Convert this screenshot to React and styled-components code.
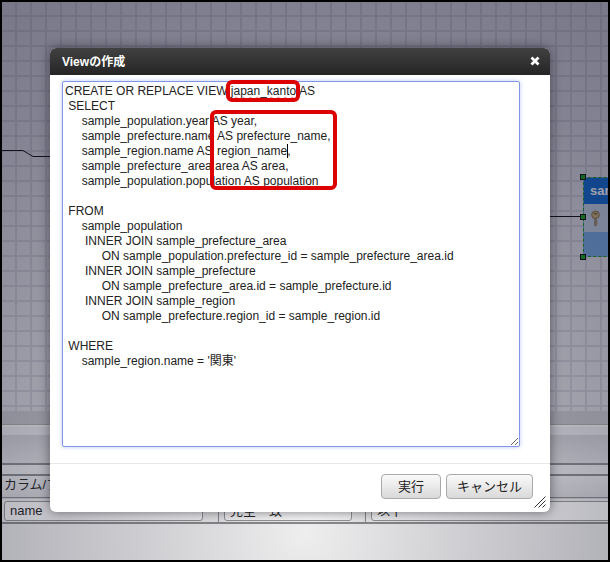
import React from "react";
import styled, { createGlobalStyle } from "styled-components";

const GlobalStyle = createGlobalStyle`
  html, body {
    margin: 0;
    padding: 0;
    height: 100%;
    overflow: hidden;
    background: #000;
  }
  body {
    font-family: "Liberation Sans", "Noto Sans CJK JP", sans-serif;
    color: #222;
  }
`;

const Frame = styled.div`
  position: relative;
  box-sizing: border-box;
  width: 610px;
  height: 562px;
  border: 2px solid #000;
  display: flex;
  flex-direction: column;
  overflow: hidden;
  background: #f2f2f2;
`;

const Canvas = styled.div`
  position: relative;
  height: 409px;
  flex: none;
  overflow: hidden;
  background-color: #d6d6dc;
  background-image: linear-gradient(#c0c0ca 2px, transparent 2px),
    linear-gradient(90deg, #c0c0ca 2px, transparent 2px);
  background-size: 15px 15px;
  background-position: 13px 13px;
`;

const Wires = styled.svg`
  position: absolute;
  left: 0;
  top: 0;
`;

const TableNode = styled.div`
  position: absolute;
  left: 581px;
  top: 175px;
  width: 120px;
  height: 80px;
  box-sizing: border-box;
  border: 1px dashed #0c8a0c;
  display: flex;
  flex-direction: column;
  background: #6c9fd8;
`;

const NodeHead = styled.div`
  height: 26px;
  flex: none;
  background: #005ec8;
  color: #fff;
  font-size: 13px;
  font-weight: bold;
  line-height: 26px;
  padding-left: 6px;
`;

const NodeRow = styled.div`
  height: 28px;
  flex: none;
  background: #b8c8d9;
  display: flex;
  align-items: center;
  padding-left: 6px;
`;

const Handle = styled.span`
  position: absolute;
  left: -4px;
  top: ${(props) => props.y}px;
  width: 4px;
  height: 4px;
  border: 1px solid #000;
  background: #0a9a0a;
`;

const BottomPanel = styled.div`
  flex: 1;
  display: flex;
  flex-direction: column;
`;

const DarkBand = styled.div`
  height: 13px;
  background: #c2c2c8;
  border-bottom: 1px solid #aaa;
`;

const LightStrip = styled.div`
  height: 8px;
  margin-top: 2px;
  background: #e8e8ec;
`;

const ToolStrip = styled.div`
  height: 28px;
  background: linear-gradient(#cfcfd4, #e2e2e6);
  border-bottom: 2px solid #8c8c90;
`;

const SpacerRow = styled.div`
  height: 9px;
  background: #eeeef0;
  border-bottom: 2px solid #8c8c90;
`;

const HeadRow = styled.div`
  height: 22px;
  box-sizing: border-box;
  padding: 1px 2px 0;
  font-size: 13px;
  line-height: 16px;
  color: #222;
  background: linear-gradient(#eeeef0, #dedee2);
  border-bottom: 1px solid #8c8c90;
`;

const InputRow = styled.div`
  display: grid;
  grid-template-columns: 216px 147px 1fr;
  height: 26px;
  box-sizing: border-box;
  border-top: 1px solid #d8d8dc;
  border-bottom: 2px solid #8c8c90;
`;

const InputCell = styled.div`
  padding: 2px ${(props) => props.end}px 0 ${(props) => props.pad}px;
  border-left: ${(props) => (props.first ? "none" : "1px solid #8c8c90")};
`;

const FieldBox = styled.div`
  box-sizing: border-box;
  height: 20px;
  width: ${(props) => props.w || "100%"};
  border: 1px solid #999;
  border-radius: 3px;
  background: #fff;
  padding-left: 5px;
  font-size: 13px;
  line-height: 18px;
  white-space: nowrap;
  overflow: hidden;
`;

const Floor = styled.div`
  flex: 1;
`;

const Overlay = styled.div`
  position: absolute;
  inset: 0;
  background: radial-gradient(
    circle 640px at 303px 530px,
    rgba(40, 40, 60, 0.02) 0,
    rgba(40, 40, 62, 0.3) 45%,
    rgba(40, 40, 66, 0.47) 75%,
    rgba(40, 40, 66, 0.56) 100%
  );
`;

const Dialog = styled.div`
  position: absolute;
  left: 48px;
  top: 46px;
  width: 500px;
  height: 464px;
  display: flex;
  flex-direction: column;
  background: #fff;
  border-radius: 6px;
  box-shadow: 0 0 12px rgba(20, 20, 30, 0.55);
`;

const TitleBar = styled.div`
  height: 27px;
  flex: none;
  box-sizing: border-box;
  display: flex;
  align-items: center;
  justify-content: space-between;
  padding: 0 10px 2px 12px;
  border-radius: 6px 6px 0 0;
  background: linear-gradient(#414141, #252525);
  color: #fff;
  font-size: 12px;
  font-weight: bold;
`;

const CloseIcon = styled.svg`
  display: block;
  margin-top: 1px;
`;

const Body = styled.div`
  height: 389px;
  flex: none;
  box-sizing: border-box;
  padding: 6px 30px 0 12px;
  border-bottom: 1px solid #e8e8e8;
`;

const SqlBox = styled.div`
  box-sizing: border-box;
  width: 458px;
  height: 366px;
  padding: 2px 2px;
  border: 1px solid #7f96e6;
  border-radius: 2px;
  box-shadow: 0 0 4px rgba(110, 140, 235, 0.45);
  font-size: 12px;
  line-height: 15px;
  color: #222;
  white-space: pre;
  overflow: hidden;
  resize: both;
`;

const Misspelled = styled.span`
  text-decoration: underline wavy #ef8a8a 1px;
  text-underline-offset: 1px;
`;

const Alias = styled.span`
  margin-left: -2px;
`;

const Caret = styled.span`
  display: inline-block;
  width: 0;
  height: 14px;
  margin-right: -1px;
  border-left: 1px solid #000;
  vertical-align: -3px;
`;

const Footer = styled.div`
  flex: 1;
  display: flex;
  justify-content: flex-end;
  gap: 5px;
  padding: 10px 17px 0 0;
`;

const Button = styled.button`
  width: ${(props) => props.w}px;
  height: 25px;
  padding: 0;
  border: 1px solid #aaa;
  border-radius: 4px;
  background: linear-gradient(#fafafa, #d9d9d9);
  color: #222;
  font-family: inherit;
  font-size: 13px;
  line-height: 23px;
`;

const Grip = styled.svg`
  position: absolute;
  right: 4px;
  bottom: 4px;
`;

const RedMark = styled.div`
  position: absolute;
  left: ${(props) => props.x}px;
  top: ${(props) => props.y}px;
  width: ${(props) => props.w}px;
  height: ${(props) => props.h}px;
  box-sizing: border-box;
  border: 4px solid #dc0000;
  border-radius: 6px;
  pointer-events: none;
`;

const Key = () => (
  <svg width="11" height="17" viewBox="0 0 12 18">
    <circle cx="6" cy="5" r="4.2" fill="#c0a468" stroke="#77653c" />
    <ellipse cx="6" cy="3.6" rx="2" ry="1" fill="#6e5c36" />
    <path d="M5 9 V16.5 L7 17 V15.5 L8 14.5 L7 13.5 L8 12.5 L7 11.5 V9 Z" fill="#a58c58" stroke="#6e5c36" strokeWidth="0.6" />
  </svg>
);

const App = () => (
  <>
    <GlobalStyle />
    <Frame>
      <Canvas>
        <Wires width="606" height="409">
          <polyline points="0,148.5 21,148.5 31,154.5 60,154.5" fill="none" stroke="#000" />
          <line x1="540" y1="214.5" x2="582" y2="214.5" stroke="#000" />
        </Wires>
        <TableNode>
          <NodeHead>sample_region</NodeHead>
          <NodeRow>
            <Key />
          </NodeRow>
          <Handle y={-4} />
          <Handle y={36} />
          <Handle y={76} />
        </TableNode>
      </Canvas>
      <BottomPanel>
        <DarkBand />
        <LightStrip />
        <ToolStrip />
        <SpacerRow />
        <HeadRow>カラム/フィールド</HeadRow>
        <InputRow>
          <InputCell first pad={2} end={15}>
            <FieldBox>name</FieldBox>
          </InputCell>
          <InputCell pad={5} end={13}>
            <FieldBox>完全一致</FieldBox>
          </InputCell>
          <InputCell pad={5} end={13}>
            <FieldBox w="300px">以下</FieldBox>
          </InputCell>
        </InputRow>
        <Floor />
      </BottomPanel>
      <Overlay />
      <Dialog>
        <TitleBar>
          <span>Viewの作成</span>
          <CloseIcon width="10" height="10" viewBox="0 0 10 10">
            <path d="M1.5 1.5 L8.5 8.5 M8.5 1.5 L1.5 8.5" stroke="#fff" strokeWidth="2.8" />
          </CloseIcon>
        </TitleBar>
        <Body>
          <SqlBox>
            {"CREATE OR REPLACE VIEW "}
            <Misspelled>japan_kanto</Misspelled>
            {" AS\n SELECT\n     sample_population.year AS year,\n     sample_prefecture.name AS prefecture_name,\n     sample_region.name AS  "}
            <Alias>region_name</Alias>
            <Caret />
            {",\n     sample_prefecture_area.area AS area,\n     sample_population.population AS population\n\n FROM\n     sample_population\n      INNER JOIN sample_prefecture_area\n           ON sample_population.prefecture_id = sample_prefecture_area.id\n      INNER JOIN sample_prefecture\n           ON sample_prefecture_area.id = sample_prefecture.id\n      INNER JOIN sample_region\n           ON sample_prefecture.region_id = sample_region.id\n\n WHERE\n     sample_region.name = '関東'"}
          </SqlBox>
        </Body>
        <Footer>
          <Button w={60}>実行</Button>
          <Button w={87}>キャンセル</Button>
        </Footer>
        <Grip width="12" height="12" viewBox="0 0 12 12">
          <path d="M0.5 11.5 L11.5 0.5 M4.5 11.5 L11.5 4.5 M8.5 11.5 L11.5 8.5" stroke="#333" strokeWidth="1" />
        </Grip>
        <RedMark x={176} y={32} w={74} h={22} />
        <RedMark x={160} y={62} w={127} h={80} />
      </Dialog>
    </Frame>
  </>
);

export default App;
